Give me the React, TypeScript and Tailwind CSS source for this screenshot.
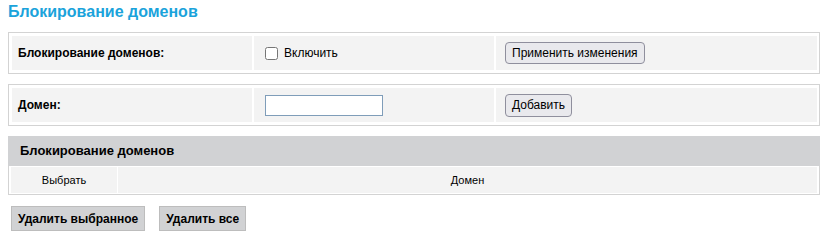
import React, { useState } from 'react';

const font = { fontFamily: '"Liberation Sans", Arial, sans-serif' };

export default function App() {
  const [enabled, setEnabled] = useState(false);
  const [domain, setDomain] = useState('');

  return (
    <div className="bg-white min-h-[241px] pl-2 pt-[3px] text-black" style={font}>
      {/* Page title */}
      <h1 className="text-[16px] leading-[18px] font-bold text-[#1ba3db]">Блокирование доменов</h1>

      {/* Enable row */}
      <div className="mt-[11px] w-[812px] border border-[#d3d3d3] p-[3px] pr-[2px] flex gap-[2px]">
        <div className="w-[240px] h-[34px] bg-[#f3f3f3] pl-[6px] flex items-center text-[12px] font-bold">
          Блокирование доменов:
        </div>
        <div className="w-[240px] h-[34px] bg-[#f3f3f3] pl-[11px] flex items-center text-[12px]">
          <label className="flex items-center gap-[6px]">
            <input
              type="checkbox"
              checked={enabled}
              onChange={(e) => setEnabled(e.target.checked)}
              className="m-0 w-[13px] h-[13px]"
            />
            <span>Включить</span>
          </label>
        </div>
        <div className="flex-1 h-[34px] bg-[#f3f3f3] pl-[9px] flex items-center">
          <button className="h-[22px] px-[6px] text-[12px] bg-[#e9e9ed] border border-[#8f8f9d] rounded-[4px]">
            Применить изменения
          </button>
        </div>
      </div>

      {/* Domain row */}
      <div className="mt-[10px] w-[812px] border border-[#d3d3d3] p-[3px] pr-[2px] flex gap-[2px]">
        <div className="w-[240px] h-[34px] bg-[#f3f3f3] pl-[6px] flex items-center text-[12px] font-bold">
          Домен:
        </div>
        <div className="w-[240px] h-[34px] bg-[#f3f3f3] pl-[11px] flex items-center">
          <input
            type="text"
            value={domain}
            onChange={(e) => setDomain(e.target.value)}
            className="w-[118px] h-[21px] border border-[#7f9db9] bg-white text-[12px] px-1 outline-none"
          />
        </div>
        <div className="flex-1 h-[34px] bg-[#f3f3f3] pl-[9px] flex items-center">
          <button className="h-[23px] px-[6px] text-[12px] bg-[#e9e9ed] border border-[#8f8f9d] rounded-[4px]">
            Добавить
          </button>
        </div>
      </div>

      {/* Domain list */}
      <div className="mt-[10px] w-[812px]">
        <div className="h-[30px] bg-[#d1d2d4] pl-[12px] flex items-center text-[13px] font-bold">
          Блокирование доменов
        </div>
        <div className="border-x border-b border-[#d3d3d3] px-[2px] pt-[1px] pb-[1px] flex gap-[1px]">
          <div className="w-[106px] h-[26px] bg-[#f3f3f3] flex items-center justify-center text-[11px]">Выбрать</div>
          <div className="flex-1 h-[26px] bg-[#f3f3f3] flex items-center justify-center text-[11px]">Домен</div>
        </div>
      </div>

      {/* Actions */}
      <div className="mt-[11px] ml-[3px] flex gap-[14px]">
        <button className="h-[25px] px-[6px] bg-[#d1d2d4] border border-[#bdbdbd] text-[12px] font-bold">
          Удалить выбранное
        </button>
        <button className="h-[25px] px-[6px] bg-[#d1d2d4] border border-[#bdbdbd] text-[12px] font-bold">
          Удалить все
        </button>
      </div>
    </div>
  );
}
